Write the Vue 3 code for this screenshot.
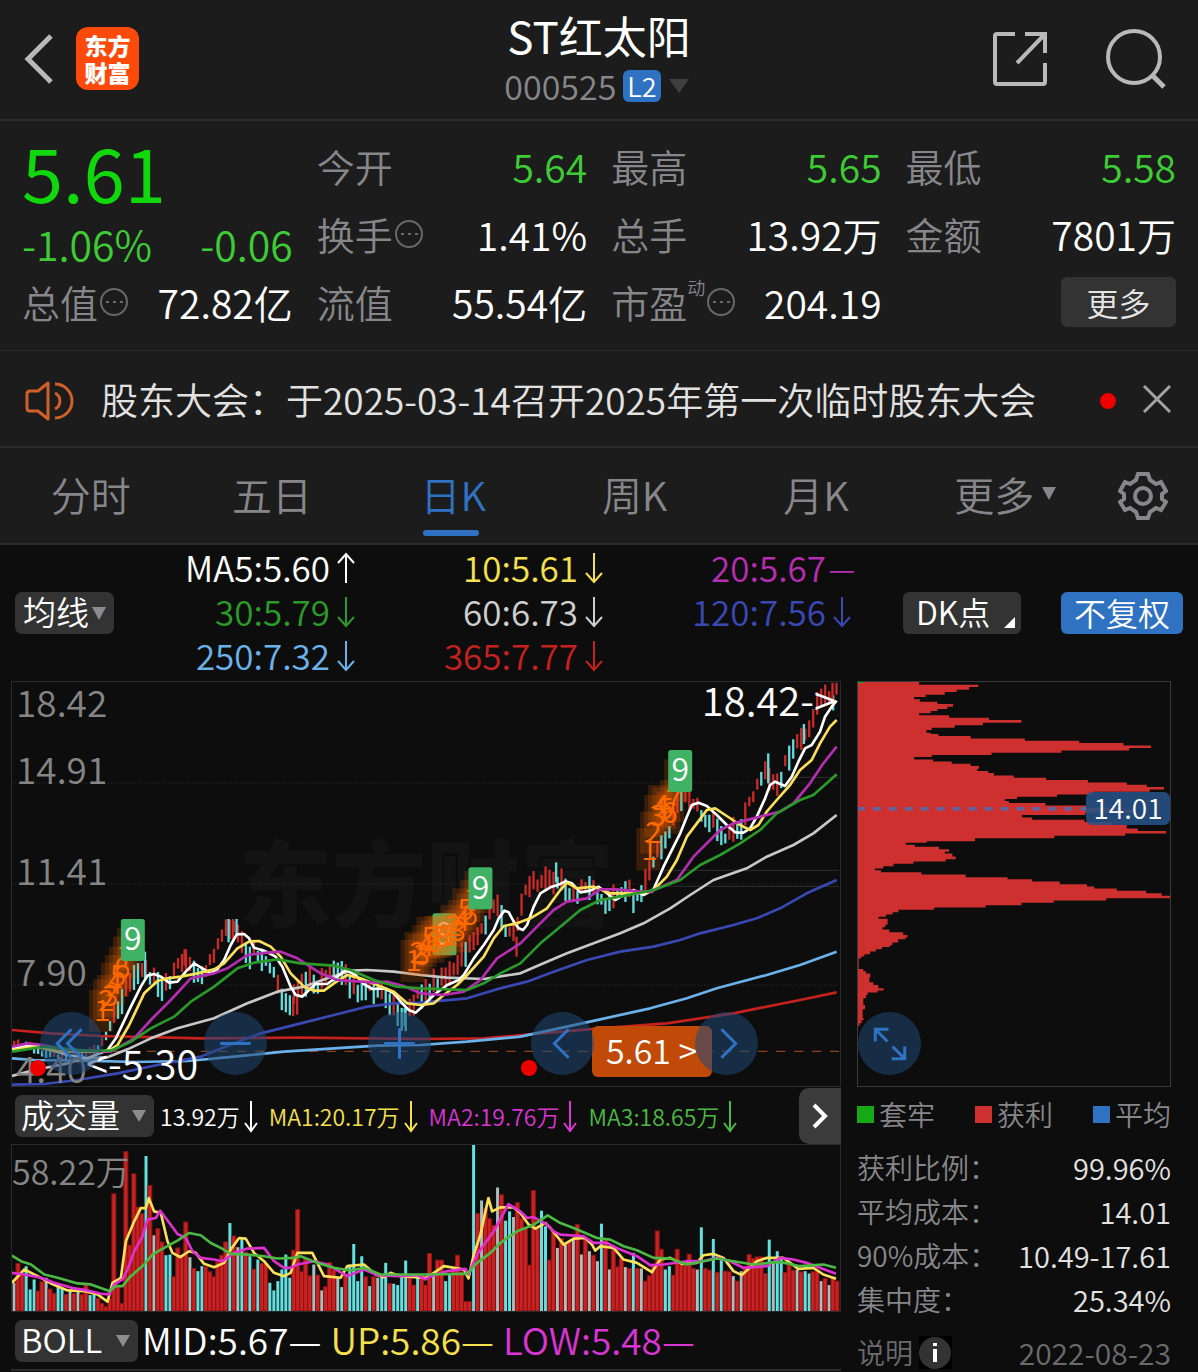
<script setup>
import { ref } from 'vue'

const quotes = [
  { label: '今开', value: '5.64', down: true },
  { label: '最高', value: '5.65', down: true },
  { label: '最低', value: '5.58', down: true },
  { label: '换手', value: '1.41%', info: true },
  { label: '总手', value: '13.92万' },
  { label: '金额', value: '7801万' },
  { label: '流值', value: '55.54亿' },
  { label: '市盈', value: '204.19', info: true, sup: '动' },
]

const tabs = ['分时', '五日', '日K', '周K', '月K']
const activeTab = ref('日K')

const arrows = {
  up: 'M16 34V5M8 14 16 5 24 14',
  down: 'M16 4V33M8 24 16 33 24 24',
}

const averages = [
  { text: 'MA5:5.60', mark: 'up', color: '#ffffff' },
  { text: '10:5.61', mark: 'down', color: '#f5e04f' },
  { text: '20:5.67', mark: 'flat', color: '#b52db0' },
  { text: '30:5.79', mark: 'down', color: '#2c9a2a' },
  { text: '60:6.73', mark: 'down', color: '#cfcfcf' },
  { text: '120:7.56', mark: 'down', color: '#3a48b4' },
  { text: '250:7.32', mark: 'down', color: '#6cb2ea' },
  { text: '365:7.77', mark: 'down', color: '#c4211f' },
]

const volumeInfo = [
  { text: '13.92万', color: '#ffffff' },
  { text: 'MA1:20.17万', color: '#f5e04f' },
  { text: 'MA2:19.76万', color: '#d935d3' },
  { text: 'MA3:18.65万', color: '#4cb944' },
]

const bollInfo = [
  { text: 'MID:5.67—', color: '#ffffff' },
  { text: 'UP:5.86—', color: '#f5e04f' },
  { text: 'LOW:5.48—', color: '#d935d3' },
]

const legend = [
  { text: '套牢', color: '#17a817' },
  { text: '获利', color: '#cd302f' },
  { text: '平均', color: '#2f72c2' },
]

const chipStats = [
  { label: '获利比例：', value: '99.96%' },
  { label: '平均成本：', value: '14.01' },
  { label: '90%成本：', value: '10.49-17.61' },
  { label: '集中度：', value: '25.34%' },
]

const ma5 = '33,1105 60,1100 100,1095 150,1110 200,1125 260,1135 320,1110 345,1075 390,980 420,920 440,887 460,882 480,890 505,908 530,905 555,875 580,850 600,862 630,880 650,868 670,840 690,795 708,763 730,762 745,775 760,803 790,812 825,830 845,860 870,920 885,945 905,950 925,930 945,912 980,912 1010,890 1035,870 1065,885 1090,912 1115,927 1150,925 1180,940 1205,970 1225,990 1245,998 1260,985 1300,945 1340,915 1375,900 1390,885 1420,835 1450,795 1480,750 1495,715 1512,692 1525,697 1540,725 1555,745 1568,750 1580,735 1600,680 1620,640 1650,622 1680,612 1695,604 1715,610 1740,637 1770,632 1795,620 1820,640 1845,660 1870,645 1900,630 1930,645 1960,628 1990,560 2020,500 2040,460 2060,410 2075,375 2095,368 2120,378 2150,405 2180,435 2205,457 2230,458 2250,445 2270,410 2295,355 2310,315 2325,305 2355,318 2375,290 2395,245 2415,205 2435,195 2460,155 2475,110 2495,80 2510,62'

const priceLines = [
  { color: '#c4211f', points: '33,1050 150,1060 300,1068 600,1075 900,1073 1260,1077 1450,1075 1600,1062 1800,1045 2000,1030 2200,1000 2400,960 2510,937' },
  { color: '#6cb2ea', points: '33,1135 100,1140 250,1142 400,1146 560,1143 700,1130 850,1115 1000,1105 1130,1097 1260,1095 1400,1085 1560,1070 1700,1040 1800,1018 1950,985 2060,955 2150,925 2300,885 2400,855 2510,815' },
  { color: '#3a48b4', points: '33,1214 130,1212 230,1200 350,1180 470,1155 600,1130 700,1090 780,1060 900,1030 1000,1005 1100,980 1180,970 1260,968 1400,955 1500,925 1580,905 1660,875 1760,840 1860,815 1960,800 2040,780 2100,760 2200,735 2270,715 2340,685 2420,640 2510,600' },
  { color: '#c8c8c8', points: '33,1188 100,1170 200,1150 250,1135 320,1132 380,1108 450,1075 530,1045 640,1015 740,970 830,935 910,920 980,895 1050,872 1100,870 1180,875 1260,885 1340,893 1450,897 1560,880 1640,845 1700,820 1780,790 1860,760 1930,730 2010,685 2070,645 2140,600 2240,565 2300,530 2380,495 2440,460 2510,405' },
  { color: '#ffffff', points: ma5 },
  { color: '#fbe05a', points: '33,1110 100,1100 180,1115 320,1115 350,1095 385,1035 430,940 470,903 500,895 540,890 590,880 640,868 670,850 710,805 745,785 775,783 810,800 840,830 870,880 910,920 940,932 970,932 1000,910 1040,885 1080,895 1130,915 1180,935 1220,970 1260,975 1300,970 1330,945 1370,915 1400,885 1450,830 1480,775 1510,738 1550,730 1590,715 1640,685 1680,630 1700,608 1730,625 1780,620 1830,640 1900,640 1955,635 2000,590 2030,540 2060,470 2090,430 2120,390 2145,385 2180,408 2220,435 2250,450 2275,435 2300,395 2330,360 2370,315 2400,270 2435,240 2460,190 2490,140 2510,120' },
  { color: '#b52db0', points: '33,1100 80,1090 130,1095 200,1110 330,1115 400,1075 450,1020 510,960 570,895 640,880 680,865 740,825 800,818 840,815 890,835 960,880 1010,900 1080,905 1130,908 1160,905 1210,918 1260,940 1330,945 1390,935 1440,900 1490,835 1560,790 1610,740 1660,690 1700,665 1760,655 1800,628 1850,628 1920,635 1950,635 2030,600 2080,530 2160,450 2200,430 2260,415 2340,395 2380,370 2430,310 2470,250 2510,200' },
  { color: '#2c9a2a', points: '33,1115 130,1100 250,1112 330,1112 390,1085 450,1045 520,1010 570,965 640,920 710,865 760,848 830,838 900,850 1000,857 1050,870 1120,900 1190,920 1260,925 1400,930 1450,910 1500,880 1560,850 1620,790 1680,740 1740,690 1800,660 1860,650 1960,630 2040,600 2100,555 2160,525 2220,490 2280,450 2330,400 2400,360 2440,345 2480,310 2510,283' },
]

const trend = ma5.split(' ').map((p) => p.split(',').map(Number))
function priceAt(x) {
  for (let i = 1; i < trend.length; i++) {
    const [x0, y0] = trend[i - 1]
    const [x1, y1] = trend[i]
    if (x <= x1) return y0 + ((y1 - y0) * (x - x0)) / (x1 - x0)
  }
  return trend[trend.length - 1][1]
}

/* Prices lead the five-day average by about two sessions. */
const candles = []
for (let i = 0; i < 206; i++) {
  const x = 39 + i * 12
  const noise = Math.abs(Math.sin(i * 12.9898) * 43758.5453) % 1
  const noise2 = Math.abs(Math.sin(i * 78.233) * 12543.123) % 1
  const quiet = x < 330
  const slope = priceAt(x + 30) - priceAt(x)
  const half = quiet ? 8 + noise * 8 : 14 + noise * 24
  const mid = priceAt(x + 26) + slope * 0.5 + (noise2 - 0.5) * (quiet ? 12 : 30)
  const rising = noise2 < (slope < -8 ? 0.7 : slope > 8 ? 0.34 : 0.52)
  candles.push({ x, y: Math.max(8, mid - half), h: half * 2, color: rising ? '#c92a28' : '#5fdcdc' })
}
candles.push(
  { x: 683, y: 717, h: 70, color: '#5fdcdc' },
  { x: 696, y: 717, h: 60, color: '#c92a28' },
  { x: 707, y: 717, h: 50, color: '#5fdcdc' },
  { x: 432, y: 815, h: 80, color: '#5fdcdc' },
  { x: 551, y: 807, h: 50, color: '#c92a28' },
  { x: 877, y: 950, h: 58, color: '#c92a28' },
  { x: 889, y: 950, h: 54, color: '#c92a28' },
  { x: 1212, y: 985, h: 54, color: '#5fdcdc' },
  { x: 1548, y: 770, h: 60, color: '#c92a28' },
  { x: 1667, y: 547, h: 60, color: '#5fdcdc' },
  { x: 2304, y: 220, h: 90, color: '#5fdcdc' },
  { x: 2411, y: 132, h: 60, color: '#5fdcdc' },
  { x: 2497, y: 8, h: 52, color: '#c92a28' },
  { x: 2509, y: 8, h: 36, color: '#c92a28' },
)

/* Sequential counts: eight overlapping steps which end in a nine. */
const counts = [
  { x: 264, ys: [930, 898, 885, 848, 825, 800, 770, 745], end: 717 },
  { x: 1200, ys: [780, 755, 762, 735, 710, 722, 708, 706], end: 700, under: true },
  { x: 1308, ys: [700, 675, 690, 660, 625, 640, 600, 573], end: 562 },
  { x: 1908, ys: [445, 395, 345, 315, 322, 335, 300, 238], end: 210 },
]

const volumes = '595g 535r 570r 545c 615c 585c 618r 590r 580g 612r 625r 600c 610c 628r 618g 625r 615g 628r 595r 632c 630c 640r 655r 665r 640r 325r 600r 655r 198r 480r 265r 365r 385r 213c 300r 452g 430r 470r 512c 510c 575r 488r 515r 410r 518g 550r 560c 545c 545r 560r 575r 530r 510r 470r 415c 452r 488g 460c 500r 515c 552r 525c 535r 535r 595c 618c 590c 555c 510c 580c 495r 373r 560r 520r 572r 540g 570r 618g 605r 532r 555r 578g 608c 565r 540c 478c 590c 515c 575r 605c 575r 580g 575c 535c 595r 598c 602c 578c 528c 575r 600r 575c 570r 600r 505r 570g 525r 525r 590c 570c 555r 510r 560r 650r 650r 180c 385r 347g 370r 400r 420r 308g 328r 408c 380c 397g 352r 400r 430r 540r 315r 430r 378c 425c 525r 440r 490g 460r 480g 470r 460g 418r 510g 460r 500g 510r 530g 417c 465r 555g 490r 545r 520r 548g 550r 505c 550r 552g 588r 572r 540r 437r 492r 555c 545c 570r 492r 530r 540r 507r 550r 555g 428c 550r 555r 463c 562r 525c 558r 560r 575g 588r 560g 545r 508r 520r 515r 515r 565r 465c 530g 500c 520c 562r 540r 555r 555g 560r 560c 567c 560r 560r 590g 580r 602g 575r 588r'
  .split(' ')
  .map((v, i) => ({ x: 39 + i * 12, top: parseInt(v), kind: v.slice(-1) }))

const volumeLines = [
  { color: '#fbe05a', points: '33,595 70,555 110,575 150,597 200,618 250,620 290,630 320,652 335,595 360,580 375,470 400,410 420,370 435,370 444,340 460,380 480,385 500,470 515,505 538,518 565,500 585,505 610,538 640,548 670,535 690,495 715,460 735,462 760,505 790,530 820,565 850,575 870,565 890,505 935,505 970,575 1020,580 1040,545 1090,540 1125,570 1150,578 1170,565 1200,575 1275,580 1290,572 1330,545 1375,552 1390,555 1404,582 1420,510 1440,450 1455,380 1464,340 1475,380 1500,368 1540,368 1560,385 1585,420 1605,432 1635,415 1650,430 1690,480 1720,462 1755,460 1775,480 1785,498 1800,485 1840,490 1870,525 1910,535 1955,563 1980,525 2010,520 2045,538 2090,535 2110,512 2140,508 2170,520 2200,560 2225,572 2270,530 2300,520 2350,520 2395,553 2440,550 2470,570 2508,583' },
  { color: '#e02fd0', points: '33,565 70,570 120,580 160,595 220,612 260,618 300,628 325,630 340,600 365,585 380,555 400,500 425,455 440,405 465,400 478,378 510,420 530,448 555,460 575,500 600,520 640,525 665,530 700,505 740,492 790,490 820,530 850,550 870,550 890,540 940,530 980,540 1040,575 1090,555 1130,572 1190,575 1250,572 1275,585 1290,575 1340,560 1395,553 1404,570 1430,510 1480,440 1510,385 1524,358 1560,380 1580,400 1600,397 1640,420 1660,440 1680,450 1750,455 1780,475 1820,475 1860,495 1910,515 1950,542 1990,540 2060,530 2110,530 2150,520 2190,530 2230,550 2300,545 2340,520 2380,525 2420,535 2460,550 2508,568' },
  { color: '#4cb944', points: '33,513 60,530 90,540 130,570 170,580 230,597 270,600 325,620 345,605 365,605 385,580 430,540 455,510 490,490 530,468 565,445 600,452 630,475 660,490 690,508 740,510 790,515 830,522 880,520 900,515 950,535 1000,550 1050,558 1090,550 1140,570 1275,570 1380,568 1400,568 1430,535 1470,505 1500,475 1550,440 1600,420 1642,392 1680,415 1720,430 1790,460 1830,465 1870,485 1910,497 1960,520 2010,522 2060,540 2150,522 2200,530 2260,540 2340,532 2400,545 2470,540 2508,550' },
]

const chips = '37:220 45:398 52:370 60:333 67:297 75:240 82:205 89:222 96:275 103:322 111:305 118:275 124:255 131:220 137:310 144:430 151:528 159:412 167:327 174:258 181:242 189:255 193:278 199:375 206:538 213:702 220:835 227:918 235:852 242:648 249:438 256:258 262:205 269:262 275:318 282:375 289:400 297:395 304:428 310:445 317:505 324:602 331:728 338:845 345:905 352:957 359:914 366:745 374:635 381:515 388:478 394:490 400:600 407:722 414:830 421:865 429:720 436:530 443:560 450:718 457:800 466:845 476:878 484:963 491:840 498:627 505:388 514:243 519:180 525:207 531:280 538:310 546:297 551:320 560:330 568:300 575:203 582:143 589:112 596:87 601:105 607:227 614:360 622:486 628:560 635:643 643:725 650:747 656:815 663:903 670:950 678:975 685:783 692:625 699:528 706:420 713:265 720:158 727:140 734:120 741:98 747:125 765:118 772:110 779:130 787:172 795:185 803:178 808:157 818:140 826:132 831:108 838:90 845:72 853:55 860:45 866:38 890:38 897:52 904:60 911:73 923:70 937:82 945:97 955:113 962:95 968:65 975:60 985:52 1005:57 1018:50 1045:53 1050:47 1060:40 1068:36'
const chipPath = 'M36 37' + chips.split(' ').map((p) => {
  const [y, x] = p.split(':')
  return `V${y}H${x}`
}).join('') + 'H36Z'
</script>

<template>
  <div class="app">
    <header class="top">
      <div class="top-left">
        <button class="plain" aria-label="返回">
          <svg width="30" height="52" viewBox="0 0 30 52"><path d="M27 3 4 26 27 49" fill="none" stroke="#b9b9b9" stroke-width="5" /></svg>
        </button>
        <a class="logo" href="#"><span>东方</span><span>财富</span></a>
      </div>
      <div class="title">
        <h1>ST红太阳</h1>
        <div class="code">
          <span>000525</span><span class="level">L2</span>
          <svg width="22" height="16" viewBox="0 0 22 16"><path d="M1 1h20L11 15z" fill="#3f3f3f" /></svg>
        </div>
      </div>
      <div class="top-right">
        <button class="plain" aria-label="分享">
          <svg width="56" height="56" viewBox="0 0 56 56" fill="none" stroke="#b9b9b9" stroke-width="4">
            <path d="M23 3H5Q3 3 3 5V51Q3 53 5 53H51Q53 53 53 51V32M33 3H53V22M53 3 25 32" />
          </svg>
        </button>
        <button class="plain" aria-label="搜索">
          <svg width="60" height="60" viewBox="0 0 60 60" fill="none" stroke="#b9b9b9" stroke-width="4">
            <circle cx="28" cy="28" r="26" /><path d="M46 46 58 58" stroke-width="5" />
          </svg>
        </button>
      </div>
    </header>

    <section class="quote">
      <div class="main">
        <strong class="price">5.61</strong>
        <div class="cell change down"><span>-1.06%</span><span>-0.06</span></div>
        <div class="cell">
          <span class="label">总值<svg class="info" viewBox="0 0 30 30"><circle cx="15" cy="15" r="13" /><path d="M7 15h3M14 15h3M21 15h3" /></svg></span>
          <span>72.82亿</span>
        </div>
      </div>
      <div class="cells">
        <div v-for="q in quotes" :key="q.label" class="cell">
          <span class="label">{{ q.label }}<sup v-if="q.sup">{{ q.sup }}</sup><svg v-if="q.info" class="info" viewBox="0 0 30 30"><circle cx="15" cy="15" r="13" /><path d="M7 15h3M14 15h3M21 15h3" /></svg></span>
          <span :class="{ down: q.down }">{{ q.value }}</span>
        </div>
        <div class="cell end"><button class="more">更多</button></div>
      </div>
    </section>

    <section class="notice">
      <svg width="50" height="44" viewBox="0 0 50 44" fill="none" stroke="#d0602a" stroke-width="3" stroke-linejoin="round">
        <path d="M24 4V40L14 32H6Q3 32 3 29V15Q3 12 6 12H14ZM31 14A9 9 0 0 1 31 30M31 5A17 17 0 0 1 31 39" />
      </svg>
      <p>股东大会：于2025-03-14召开2025年第一次临时股东大会</p>
      <i class="dot"></i>
      <button class="plain" aria-label="关闭">
        <svg width="30" height="30" viewBox="0 0 30 30"><path d="M2 2 28 28M28 2 2 28" stroke="#a3a3a3" stroke-width="3" /></svg>
      </button>
    </section>

    <nav class="tabs">
      <button v-for="t in tabs" :key="t" class="tab" :class="{ active: t === activeTab }" @click="activeTab = t">{{ t }}</button>
      <button class="tab other">更多<svg width="14" height="14" viewBox="0 0 14 14"><path d="M0 0h14L7 13z" fill="#87878b" /></svg></button>
      <button class="plain gear" aria-label="设置">
        <svg width="50" height="50" viewBox="0 0 50 50" fill="none" stroke="#87878b" stroke-width="4">
          <path d="M20 3H30L32 9 38 13 43 11 48 20 44 23V28L48 31 43 39 38 37 32 41 30 47H20L18 41 12 37 7 39 2 31 6 28V23L2 20 7 11 12 13 18 9Z" />
          <circle cx="25" cy="25" r="8" />
        </svg>
      </button>
    </nav>

    <section class="averages">
      <div class="select ma">
        <select aria-label="均线"><option>均线</option></select>
        <svg width="14" height="13" viewBox="0 0 14 13"><path d="M0 0h14L7 13z" fill="#8c8c90" /></svg>
      </div>
      <div class="ma-grid">
        <span v-for="a in averages" :key="a.text" :style="{ color: a.color }">{{ a.text }}<b v-if="a.mark === 'flat'">—</b><svg v-else class="arrow" viewBox="0 0 32 38"><path :d="arrows[a.mark]" /></svg></span>
      </div>
      <button class="chip dk">DK点<svg width="11" height="11" viewBox="0 0 11 11"><path d="M11 0V11H0z" fill="#fff" /></svg></button>
      <button class="chip blue">不复权</button>
    </section>

    <main class="body">
      <div class="charts">
        <div class="kline">
          <div class="watermark">东方财富</div>
          <svg class="plot" viewBox="33 6 2487 1212" preserveAspectRatio="none">
            <g stroke="#303030" stroke-width="3">
              <path d="M33 309H2517M33 612H2517M33 915H2517" stroke-dasharray="3 6" />
              <path d="M2380 292H2517M1980 571H2517M1980 619H2517" />
            </g>
            <path d="M330 1114H2517" stroke="#8a431c" stroke-width="4" stroke-dasharray="28 26" />
            <rect v-for="(c, i) in candles" :key="i" :x="c.x - 3" :y="c.y" width="7" :height="c.h" :fill="c.color" />
            <polyline v-for="l in priceLines" :key="l.color" :points="l.points" fill="none" :stroke="l.color" stroke-width="8" stroke-linejoin="round" />
            <g v-for="c in counts" :key="c.x">
              <template v-if="c.under">
                <rect :x="c.x + 96" :y="c.end" width="72" height="126" rx="8" fill="#3fb265" />
                <text :x="c.x + 132" :y="c.end + 94" class="nine">9</text>
              </template>
              <rect v-for="(y, k) in c.ys" :key="k" :x="c.x + k * 12" :y="y" width="72" height="126" fill="#ff6a00" fill-opacity="0.18" />
              <text v-for="(y, k) in c.ys" :key="'n' + k" :x="c.x + 40 + k * 12" :y="y + 94" class="count">{{ k + 1 }}</text>
              <template v-if="!c.under">
                <rect :x="c.x + 96" :y="c.end" width="72" height="126" rx="8" fill="#3fb265" />
                <text :x="c.x + 132" :y="c.end + 94" class="nine">9</text>
              </template>
            </g>
          </svg>
          <ul class="axis">
            <li>18.42</li><li>14.91</li><li>11.41</li><li>7.90</li><li>4.40</li>
          </ul>
          <span class="high">18.42-&gt;</span>
          <span class="low">&lt;-5.30</span>
          <i class="dot first"></i>
          <i class="dot second"></i>
          <button class="tag">5.61 &gt;</button>
          <div class="controls">
            <button aria-label="最早"><svg viewBox="0 0 62 62"><path d="M31 17 17 31 31 45M41 17 27 31 41 45" /></svg></button>
            <button aria-label="缩小"><svg viewBox="0 0 62 62"><path d="M16 31H46" /></svg></button>
            <button aria-label="放大"><svg viewBox="0 0 62 62"><path d="M16 31H46M31 16V46" /></svg></button>
            <button aria-label="向前"><svg viewBox="0 0 62 62"><path d="M37 17 23 31 37 45" /></svg></button>
            <button aria-label="向后"><svg viewBox="0 0 62 62"><path d="M26 17 40 31 26 45" /></svg></button>
          </div>
        </div>

        <div class="bar">
          <div class="select vol">
            <select aria-label="副图一"><option>成交量</option></select>
            <svg width="14" height="12" viewBox="0 0 14 12"><path d="M0 0h14L7 12z" fill="#8c8c90" /></svg>
          </div>
          <span v-for="v in volumeInfo" :key="v.text" class="narrow" :style="{ color: v.color }">{{ v.text }}<svg width="20" height="38" viewBox="0 0 20 38"><path d="M11 4V34M5 26 11 34 17 26" /></svg></span>
          <button class="next" aria-label="下一组">
            <svg width="16" height="26" viewBox="0 0 16 26"><path d="M2 2 13 13 2 24" fill="none" stroke="#fff" stroke-width="4" /></svg>
          </button>
        </div>

        <div class="volume">
          <svg class="plot" viewBox="33 180 2487 500" preserveAspectRatio="none">
            <template v-for="v in volumes" :key="v.x">
              <rect v-if="v.kind === 'r'" :x="v.x - 6" :y="v.top + 2" width="12" :height="678 - v.top" fill="#c92222" stroke="#8e1414" stroke-width="3" />
              <rect v-else :x="v.x - 4" :y="v.top" width="9" :height="680 - v.top" :fill="v.kind === 'c' ? '#63e0e0' : '#a9c0c0'" />
            </template>
            <polyline v-for="l in volumeLines" :key="l.color" :points="l.points" fill="none" :stroke="l.color" stroke-width="8" stroke-linejoin="round" />
          </svg>
          <span class="peak">58.22万</span>
        </div>

        <div class="bar boll-bar">
          <div class="select boll">
            <select aria-label="副图二"><option>BOLL</option></select>
            <svg width="14" height="12" viewBox="0 0 14 12"><path d="M0 0h14L7 12z" fill="#8c8c90" /></svg>
          </div>
          <span v-for="b in bollInfo" :key="b.text" :style="{ color: b.color }">{{ b.text }}</span>
        </div>
        <div class="boll-plot"></div>
      </div>

      <aside class="side">
        <div class="distribution">
          <svg class="plot" viewBox="36 37 939 1211" preserveAspectRatio="none">
            <path :d="chipPath" fill="#cd302f" />
            <path d="M36 38H53" stroke="#17a817" stroke-width="4" />
            <path d="M36 417H723" stroke="#5f659e" stroke-width="11" stroke-dasharray="24 24" stroke-dashoffset="3" />
          </svg>
          <span class="avg">14.01</span>
          <button class="expand" aria-label="展开">
            <svg viewBox="0 0 62 62"><path d="M17 29V17H30M18 18 29 29M46 34V46H33M45 45 34 34" /></svg>
          </button>
        </div>
        <div class="legend">
          <span v-for="l in legend" :key="l.text"><i :style="{ background: l.color }"></i>{{ l.text }}</span>
        </div>
        <dl class="stats">
          <div v-for="s in chipStats" :key="s.label"><dt>{{ s.label }}</dt><dd>{{ s.value }}</dd></div>
        </dl>
        <div class="footnote">
          <span>说明</span>
          <svg width="33" height="33" viewBox="0 0 33 33"><path d="M0 0H33V33H0z" fill="#000" /><circle cx="16" cy="17" r="16" fill="#333" /><path d="M16 13V26M16 7V10" stroke="#fff" stroke-width="4" /></svg>
          <time>2022-08-23</time>
        </div>
      </aside>
    </main>
  </div>
</template>

<style>
html,
body {
  margin: 0;
  background: #0d0d0d;
}
</style>

<style scoped>
* {
  box-sizing: border-box;
}
.app {
  font-family: "Noto Sans CJK SC", sans-serif;
  font-weight: 350;
  color: #fff;
  background: #0d0d0d;
  overflow: hidden;
}
button,
select {
  font: inherit;
  color: inherit;
  border: 0;
  padding: 0;
  margin: 0;
  cursor: pointer;
}
.plain {
  display: flex;
  background: none;
}
svg {
  flex: none;
}
.top {
  display: grid;
  grid-template-columns: 1fr auto 1fr;
  align-items: center;
  height: 121px;
  padding: 0 24px 2px;
  background: #1c1c1c;
  border-bottom: 2px solid #2b2b2b;
}
.top-left {
  display: flex;
  align-items: center;
  gap: 22px;
}
.logo {
  display: flex;
  flex-direction: column;
  align-items: center;
  justify-content: center;
  width: 63px;
  height: 63px;
  border-radius: 12px;
  background: #fd4a0b;
  color: #fff;
  font-size: 23px;
  line-height: 27px;
  font-weight: 900;
  text-decoration: none;
}
.title {
  text-align: center;
}
h1 {
  margin: 0;
  font-size: 44px;
  line-height: 54px;
  font-weight: 400;
}
.code {
  display: flex;
  align-items: center;
  justify-content: center;
  gap: 7px;
  padding-right: 4px;
  font-size: 34px;
  line-height: 48px;
  color: #87878b;
}
.level {
  padding: 0 4px;
  border-radius: 6px;
  background: #2f72c2;
  color: #fff;
  font-size: 27px;
  line-height: 32px;
}
.top-right {
  display: flex;
  align-items: center;
  justify-content: flex-end;
  gap: 58px;
  padding-right: 8px;
}
.quote {
  display: grid;
  grid-template-columns: minmax(0, 271fr) minmax(0, 860fr);
  gap: 0 24px;
  padding: 12px 22px 10px;
  height: 230px;
  background: #1c1c1c;
  border-bottom: 1px solid #2b2b2b;
  font-size: 39px;
}
.main {
  display: flex;
  flex-direction: column;
}
.price {
  height: 80px;
  font-size: 74px;
  line-height: 76px;
  font-weight: 400;
  color: #10d80d;
}
.main .change {
  height: 56px;
  padding-top: 6px;
  font-size: 41px;
}
.cells {
  display: grid;
  grid-template-columns: repeat(3, minmax(0, 1fr));
  gap: 0 24px;
  align-content: start;
}
.cell {
  display: flex;
  align-items: center;
  justify-content: space-between;
  height: 68px;
  padding-bottom: 2px;
  line-height: 66px;
  white-space: nowrap;
}
.cell.end {
  justify-content: flex-end;
}
.label {
  display: flex;
  align-items: center;
  font-size: 38px;
  color: #87878b;
}
.info {
  width: 30px;
  height: 30px;
  margin-left: 1px;
  fill: none;
  stroke: #68686b;
  stroke-width: 2;
}
sup {
  align-self: flex-start;
  font-size: 18px;
  line-height: 36px;
}
.down {
  color: #3ecb35;
}
.more {
  width: 115px;
  height: 50px;
  border-radius: 6px;
  background: #333;
  color: #e6e6e6;
  font-size: 32px;
  line-height: 46px;
}
.notice {
  display: flex;
  align-items: center;
  height: 97px;
  padding: 4px 26px 0 24px;
  background: #1c1c1c;
  border-bottom: 2px solid #2b2b2b;
}
.notice p {
  flex: 1;
  margin: 0 0 4px 27px;
  font-size: 37px;
  line-height: 52px;
  color: #e2e2e2;
  white-space: nowrap;
}
.notice .plain {
  margin: 0 0 4px 26px;
}
.dot {
  width: 16px;
  height: 16px;
  border-radius: 50%;
  background: #ee0000;
}
.tabs {
  display: grid;
  grid-template-columns: repeat(6, minmax(0, 1fr)) 110px;
  height: 97px;
  background: #1c1c1c;
  border-bottom: 2px solid #2b2b2b;
}
.tab {
  position: relative;
  display: flex;
  align-items: center;
  justify-content: center;
  gap: 8px;
  padding-bottom: 4px;
  background: none;
  color: #87878b;
  font-size: 40px;
}
.other {
  padding-left: 16px;
}
.active {
  color: #2f72c2;
}
.active::after {
  content: "";
  position: absolute;
  bottom: 7px;
  left: calc(50% - 30px);
  width: 56px;
  height: 6px;
  border-radius: 3px;
  background: #2f72c2;
}
.gear {
  align-items: center;
  justify-content: center;
}
.averages {
  display: flex;
  align-items: center;
  height: 136px;
  padding: 0 15px;
}
.ma-grid {
  display: grid;
  flex: 1;
  grid-template-columns: repeat(3, 1fr);
  padding-bottom: 2px;
  font-size: 35px;
  line-height: 42px;
  white-space: nowrap;
}
.ma-grid span {
  display: flex;
  justify-content: flex-end;
  height: 44px;
}
.ma-grid b {
  width: 32px;
  font-size: 30px;
  font-weight: 350;
  text-align: center;
}
.arrow {
  width: 32px;
  height: 38px;
  margin-top: 3px;
}
.arrow,
.narrow svg {
  fill: none;
  stroke: currentColor;
  stroke-width: 2;
}
.select {
  position: relative;
  display: flex;
  align-items: center;
  height: 42px;
  border-radius: 7px;
  background: #333;
  font-size: 33px;
}
.select select {
  width: 100%;
  height: 42px;
  padding: 0 0 3px 6px;
  appearance: none;
  background: none;
  line-height: 39px;
}
.select svg {
  position: absolute;
  right: 8px;
  pointer-events: none;
}
.ma {
  width: 99px;
}
.ma select {
  padding-left: 8px;
}
.chip {
  height: 42px;
  padding-bottom: 3px;
  border-radius: 6px;
  background: #333;
  font-size: 32px;
  line-height: 38px;
  white-space: nowrap;
}
.dk {
  display: flex;
  align-items: flex-end;
  justify-content: space-between;
  width: 118px;
  margin-left: 45px;
  padding: 0 6px 4px 13px;
}
.dk svg {
  margin-bottom: 2px;
}
.blue {
  width: 122px;
  margin-left: 40px;
  background: #2f72c2;
}
.body {
  display: flex;
  gap: 16px;
  padding: 0 27px 0 11px;
}
.charts {
  flex: 1;
  min-width: 0;
}
.kline {
  position: relative;
  height: 406px;
  border: 1px solid #2b2b2b;
}
.plot {
  display: block;
  width: 100%;
  height: 100%;
  position: relative;
}
.watermark {
  position: absolute;
  top: 132px;
  left: 50%;
  transform: translateX(-50%);
  font-size: 94px;
  line-height: 130px;
  font-weight: 900;
  color: #131313;
  white-space: nowrap;
}
.nine,
.count {
  font-size: 96px;
  text-anchor: middle;
  fill: #fff;
}
.count {
  font-size: 90px;
  fill: #ff6a00;
}
.axis {
  position: absolute;
  top: 0;
  left: 4px;
  margin: 0;
  padding: 0;
  list-style: none;
  font-size: 37px;
  line-height: 38px;
  color: #858585;
}
.axis li {
  margin-bottom: 63px;
}
.axis li:first-child {
  margin-bottom: 29px;
}
.axis li:nth-child(4) {
  margin-bottom: 59px;
}
.high,
.low {
  position: absolute;
  font-size: 40px;
  line-height: 38px;
}
.high {
  top: -2px;
  right: 4px;
}
.low {
  left: 74px;
  bottom: 5px;
}
.kline .dot {
  position: absolute;
  bottom: 10px;
}
.first {
  left: 18px;
}
.second {
  left: 509px;
}
.tag {
  position: absolute;
  left: 70%;
  bottom: 9px;
  width: 120px;
  height: 51px;
  padding-bottom: 4px;
  border-radius: 6px;
  background: #c14a09;
  font-size: 34px;
  line-height: 46px;
  white-space: nowrap;
}
.controls {
  position: absolute;
  left: 28px;
  right: 82px;
  bottom: 11px;
  display: flex;
  justify-content: space-between;
}
.controls button,
.expand {
  width: 63px;
  height: 63px;
  border-radius: 50%;
  background: rgba(33, 72, 118, 0.55);
}
.controls svg,
.expand svg {
  display: block;
  width: 63px;
  height: 63px;
  fill: none;
  stroke: #2f72c2;
  stroke-width: 3;
}
.bar {
  display: flex;
  align-items: center;
  height: 57px;
  padding-left: 4px;
  font-size: 37px;
  line-height: 50px;
  white-space: nowrap;
}
.vol {
  width: 139px;
  margin-right: 6px;
}
.boll {
  width: 123px;
  margin-right: 4px;
}
.narrow {
  display: flex;
  align-items: center;
  margin-right: 9px;
  font-size: 23px;
}
.next {
  display: flex;
  align-items: center;
  justify-content: center;
  width: 42px;
  height: 56px;
  margin-left: auto;
  border-radius: 10px 0 0 10px;
  background: #3b3b3b;
}
.volume {
  position: relative;
  height: 168px;
  border: 1px solid #2b2b2b;
}
.peak {
  position: absolute;
  top: 3px;
  left: 0;
  font-size: 34px;
  line-height: 46px;
  color: #858585;
}
.boll-bar > span {
  margin: -4px 9px 0 0;
}
.boll-plot {
  height: 2px;
  border-top: 2px solid #2b2b2b;
}
.side {
  width: 314px;
}
.distribution {
  position: relative;
  height: 406px;
  border: 1px solid #3a3a3a;
}
.avg {
  position: absolute;
  top: 110px;
  right: 0;
  width: 84px;
  height: 33px;
  border-radius: 6px;
  background: rgba(37, 82, 136, 0.88);
  font-size: 28px;
  line-height: 30px;
  text-align: center;
}
.expand {
  position: absolute;
  left: 0;
  bottom: 11px;
}
.legend {
  display: flex;
  justify-content: space-between;
  height: 54px;
  font-size: 28px;
  line-height: 52px;
  color: #87878b;
}
.legend span {
  display: flex;
  align-items: center;
  gap: 5px;
}
.legend i {
  width: 17px;
  height: 17px;
}
.stats {
  margin: 4px 0 0;
  font-size: 28px;
  line-height: 44px;
}
.stats div {
  display: flex;
  justify-content: space-between;
}
.stats dt {
  color: #87878b;
}
.stats dd {
  margin: 0;
  font-size: 29px;
  color: #e2e2e2;
}
.footnote {
  display: flex;
  align-items: center;
  height: 44px;
  margin-top: 9px;
  font-size: 28px;
  color: #6a6a6d;
}
.footnote svg {
  margin-left: 6px;
}
.footnote time {
  margin-left: auto;
  font-size: 30px;
}
</style>
